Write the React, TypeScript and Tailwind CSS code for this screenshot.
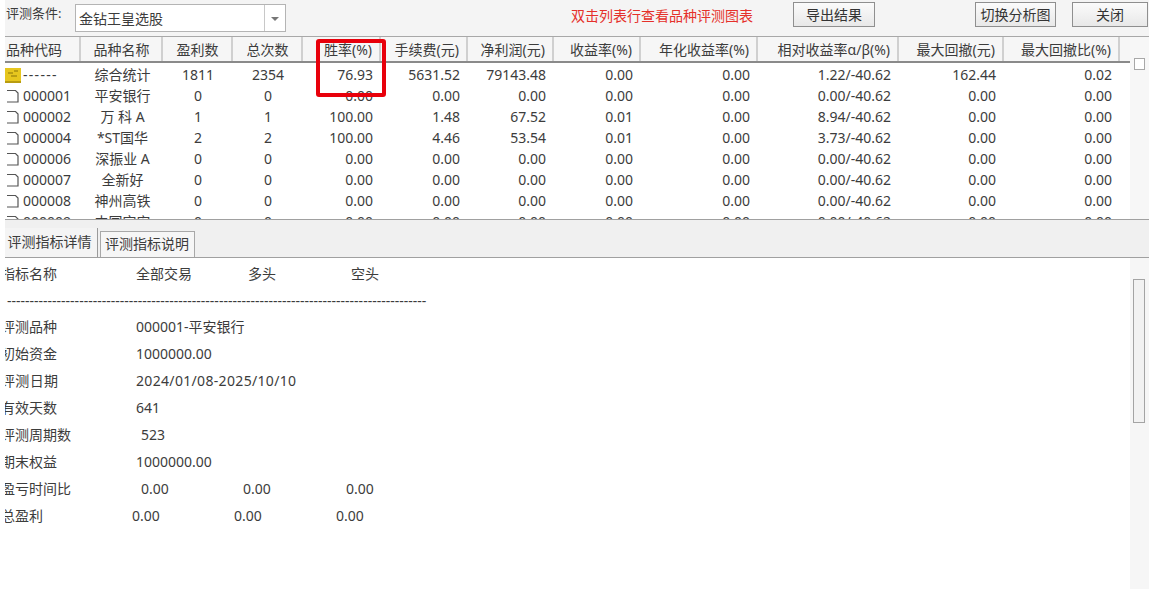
const font = { fontFamily: '"Noto Sans", "Noto Sans CJK SC", sans-serif' };

const headers = [
  "品种代码",
  "品种名称",
  "盈利数",
  "总次数",
  "胜率(%)",
  "手续费(元)",
  "净利润(元)",
  "收益率(%)",
  "年化收益率(%)",
  "相对收益率α/β(%)",
  "最大回撤(元)",
  "最大回撤比(%)",
];

const rows = [
  ["------", "综合统计", "1811", "2354", "76.93", "5631.52", "79143.48", "0.00", "0.00", "1.22/-40.62", "162.44", "0.02"],
  ["000001", "平安银行", "0", "0", "0.00", "0.00", "0.00", "0.00", "0.00", "0.00/-40.62", "0.00", "0.00"],
  ["000002", "万 科 A", "1", "1", "100.00", "1.48", "67.52", "0.01", "0.00", "8.94/-40.62", "0.00", "0.00"],
  ["000004", "*ST国华", "2", "2", "100.00", "4.46", "53.54", "0.01", "0.00", "3.73/-40.62", "0.00", "0.00"],
  ["000006", "深振业 A", "0", "0", "0.00", "0.00", "0.00", "0.00", "0.00", "0.00/-40.62", "0.00", "0.00"],
  ["000007", "全新好", "0", "0", "0.00", "0.00", "0.00", "0.00", "0.00", "0.00/-40.62", "0.00", "0.00"],
  ["000008", "神州高铁", "0", "0", "0.00", "0.00", "0.00", "0.00", "0.00", "0.00/-40.62", "0.00", "0.00"],
  ["000009", "中国宝安", "0", "0", "0.00", "0.00", "0.00", "0.00", "0.00", "0.00/-40.62", "0.00", "0.00"],
];

const gridCols =
  "grid grid-cols-[76px_82px_70px_70px_78px_87px_86px_87px_117px_141px_105px_116px]";

const details = [
  { cols: "grid-cols-[135px_112px_103px_1fr]", cells: ["指标名称", "全部交易", "多头", "空头"] },
  { cols: "grid-cols-[135px_1fr]", cells: ["评测品种", "000001-平安银行"] },
  { cols: "grid-cols-[135px_1fr]", cells: ["初始资金", "1000000.00"] },
  { cols: "grid-cols-[135px_1fr] tracking-[0.33px]", cells: ["评测日期", "2024/01/08-2025/10/10"] },
  { cols: "grid-cols-[135px_1fr]", cells: ["有效天数", "641"] },
  { cols: "grid-cols-[140px_1fr]", cells: ["评测周期数", "523"] },
  { cols: "grid-cols-[135px_1fr]", cells: ["期末权益", "1000000.00"] },
  { cols: "grid-cols-[140px_102px_103px_1fr]", cells: ["盈亏时间比", "0.00", "0.00", "0.00"] },
  { cols: "grid-cols-[131px_102px_102px_1fr]", cells: ["总盈利", "0.00", "0.00", "0.00"] },
];

function DocIcon() {
  return (
    <svg width="12" height="15" viewBox="0 0 12 15" className="shrink-0" fill="none">
      <path d="M0 2.5H8.5L11 5V14H0" stroke="#555" strokeWidth="1.2" />
    </svg>
  );
}

function FolderIcon() {
  return (
    <svg width="16" height="16" viewBox="0 0 16 16" className="shrink-0">
      <rect x="0" y="1" width="16" height="15" fill="#e6c61e" />
      <rect x="0" y="14" width="16" height="2" fill="#b89c10" />
      <path d="M3 6H8M9 4H13M6 9H12" stroke="#8a7508" strokeWidth="1" />
    </svg>
  );
}

function ToolButton({ label, className }: { label: string; className: string }) {
  return (
    <button
      className={`h-[25px] border border-[#8f8f8f] bg-gradient-to-b from-[#fbfbfb] to-[#e8e8e8] text-[14px] text-[#333] ${className}`}
    >
      {label}
    </button>
  );
}

export default function App() {
  return (
    <div
      className="relative flex h-[589px] w-[1168px] overflow-hidden bg-white pl-[5px] pr-[19px] text-[14px] text-[#3c3c3c]"
      style={font}
    >
      <div className="flex min-w-0 flex-1 flex-col overflow-hidden">
        {/* Toolbar */}
        <div className="flex h-[37px] shrink-0 items-start border-b border-[#a8a8a8] bg-[#f4f4f4]">
          <span className="ml-[1px] mt-[4px] w-[69px] shrink-0 text-[13px]">评测条件:</span>
          <div className="mt-[4px] flex h-[28px] w-[211px] shrink-0 items-center border border-[#b4b4b4] bg-white">
            <span className="flex-1 pl-[3px]">金钻王皇选股</span>
            <div className="flex h-full w-[21px] items-center justify-center border-l border-[#c8c8c8]">
              <div className="mt-[2px] border-x-[4px] border-t-[4px] border-x-transparent border-t-[#777]" />
            </div>
          </div>
          <span className="ml-[285px] mt-[5px] w-[182px] shrink-0 whitespace-nowrap text-[#e5302a]">
            双击列表行查看品种评测图表
          </span>
          <ToolButton label="导出结果" className="ml-[40px] mt-[2px] w-[82px] shrink-0" />
          <ToolButton label="切换分析图" className="ml-[100px] mt-[2px] w-[81px] shrink-0" />
          <ToolButton label="关闭" className="ml-[16px] mt-[2px] w-[76px] shrink-0" />
        </div>

        {/* Table */}
        <div className="flex h-[182px] shrink-0">
          <div className="w-[1125px] shrink-0 overflow-hidden">
            <div className={`${gridCols} h-[26px] border-b-2 border-[#8a8a8a] bg-[#f6f6f6]`}>
              {headers.map((h, i) => (
                <div
                  key={h}
                  className={`flex items-center overflow-hidden whitespace-nowrap border-r-2 border-[#d0d0d0] ${
                    i === 0 ? "pl-[1px]" : i < 4 ? "justify-center pl-[1px]" : "justify-end pr-[7px]"
                  }`}
                >
                  {h}
                </div>
              ))}
            </div>
            <div className="pt-[1px]">
              {rows.map((row, r) => (
                <div key={row[0]} className={`${gridCols} h-[21px] items-center leading-[21px]`}>
                  {row.map((cell, c) => {
                    if (c === 0) {
                      return (
                        <div key={c} className="flex items-center">
                          {r === 0 ? (
                            <FolderIcon />
                          ) : (
                            <>
                              <div className="ml-[2px]" />
                              <DocIcon />
                            </>
                          )}
                          <span className={r === 0 ? "ml-[2px] tracking-[1.3px]" : "ml-[4px]"}>{cell}</span>
                        </div>
                      );
                    }
                    return (
                      <div
                        key={c}
                        className={`whitespace-nowrap ${
                          c === 1 ? "pl-[1px] text-center" : c < 4 ? "text-center" : "pr-[8px] text-right"
                        }`}
                      >
                        {cell}
                      </div>
                    );
                  })}
                </div>
              ))}
            </div>
          </div>
          <div className="flex-1 bg-[#f7f7f7]" />
        </div>

        {/* Tabs */}
        <div className="flex h-[39px] shrink-0 items-end border-y border-[#a0a0a0] bg-[#f0f0f0]">
          <div className="flex h-[29px] w-[93px] items-center justify-center whitespace-nowrap border-r border-[#9a9a9a] bg-[#f4f4f4] pb-[2px] pr-[3px]">
            评测指标详情
          </div>
          <div className="ml-[2px] flex h-[26px] w-[95px] items-center justify-center whitespace-nowrap border-x border-t border-[#a8a8a8] bg-[#f6f6f6] pb-[2px] pr-[1px]">
            评测指标说明
          </div>
        </div>

        {/* Detail text */}
        <div className="flex min-h-0 flex-1">
          <div className="w-[1125px] shrink-0 overflow-hidden pt-[2px]">
            <div className="-ml-[4px]">
              <DetailRow row={details[0]} />
              <div className="h-[26px] whitespace-nowrap pl-[6px] leading-[27px]">
                {"-".repeat(93)}
              </div>
              {details.slice(1).map((row) => (
                <DetailRow key={row.cells[0]} row={row} />
              ))}
            </div>
          </div>
          <div className="flex flex-1 flex-col bg-[#f6f6f6] pl-[3px] pr-[4px] pt-[21px]">
            <div className="h-[144px] border border-[#a4a4a4] bg-[#f2f2f2]" />
          </div>
        </div>
      </div>

      {/* scroll corner box */}
      <div className="absolute left-[1134px] top-[58px] h-[12px] w-[11px] border border-[#a8a8a8] bg-white" />

      {/* Red annotation */}
      <div className="absolute left-[316px] top-[39px] h-[58px] w-[70px] rounded-[3px] border-[4px] border-[#e8000b]" />
    </div>
  );
}

function DetailRow({ row }: { row: { cols: string; cells: string[] } }) {
  return (
    <div className={`grid h-[27px] leading-[27px] ${row.cols}`}>
      {row.cells.map((c, i) => (
        <span key={i} className="whitespace-nowrap">
          {c}
        </span>
      ))}
    </div>
  );
}
